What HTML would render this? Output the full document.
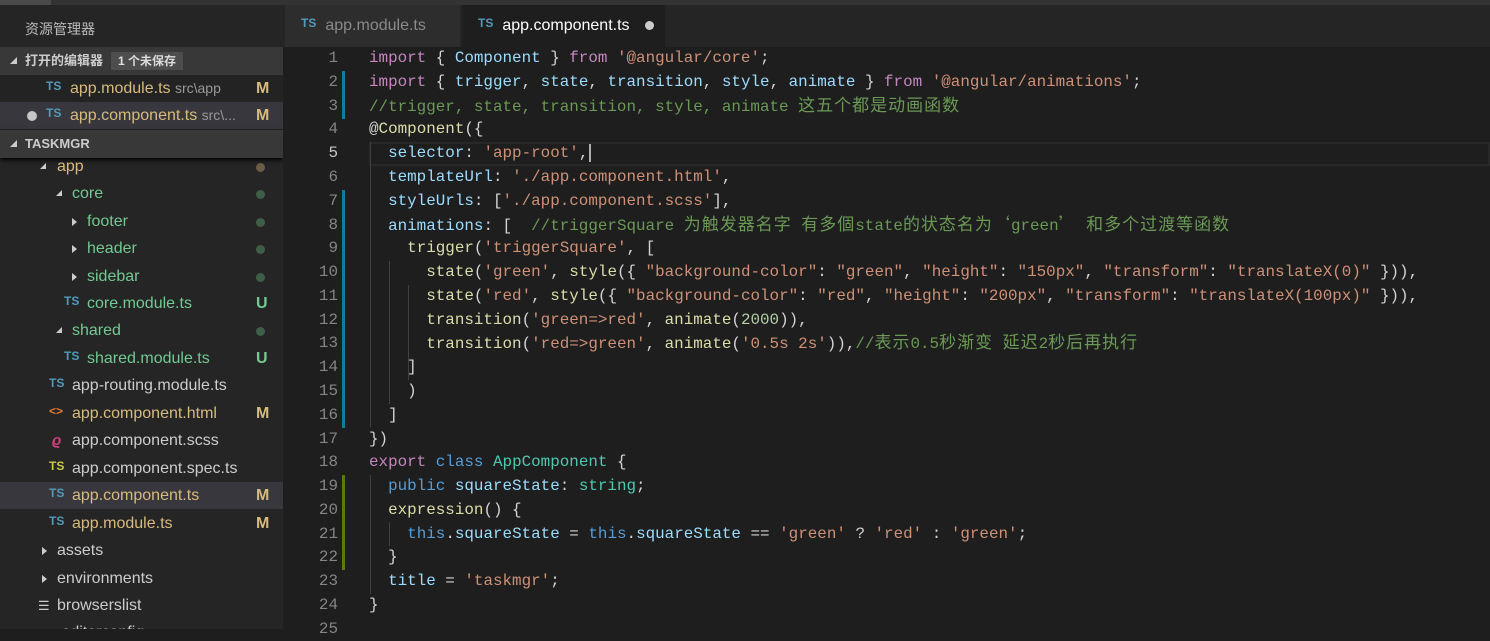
<!DOCTYPE html>
<html><head><meta charset="utf-8">
<style>
*{margin:0;padding:0;box-sizing:border-box}
body{width:1490px;height:629px;overflow:hidden;background:#1e1e1e;position:relative;font-family:"Liberation Sans","Noto Sans CJK SC",sans-serif}
.top{position:absolute;left:0;top:0;width:1490px;height:5px;background:#333}
.top i{position:absolute;left:0;top:0;width:51px;height:5px;background:#4a4a4a}
#side{position:absolute;left:0;top:5px;width:283px;height:624px;background:#252526;overflow:hidden}
.title{position:absolute;left:25px;top:14px;color:#bbb;font-size:14px}
.hdr{position:absolute;left:0;width:283px;height:28px;background:#383838;color:#ccc;font-size:13px;font-weight:bold;line-height:28px;padding-left:25px}
.hdr .tri{position:absolute;left:10px;top:10px;width:0;height:0;border-left:7px solid transparent;border-bottom:7px solid #ccc}
.badge{display:inline-block;background:#4d4d4d;color:#ddd;font-size:12px;line-height:18px;padding:0 7px;margin-left:8px;font-weight:bold}
.row{position:absolute;left:0;width:283px;height:27px;line-height:27px;font-size:16px;white-space:nowrap}
.row .ts{position:absolute;top:-2px;font-size:12px;font-weight:bold;color:#519aba}
.row .n{position:absolute;top:0}
.row .m{position:absolute;left:256px;top:0;font-size:16px;font-weight:bold}
.dot{position:absolute;left:256px;top:10px;width:9px;height:9px;border-radius:50%;background:#3e5e48}
.tr{position:absolute;top:10px;width:0;height:0;border-left:6px solid transparent;border-bottom:6px solid #ccc}
.tr.r{border-left:5px solid #ccc;border-top:4px solid transparent;border-bottom:4px solid transparent}
.y{color:#d7ba7d}.g{color:#73c991}.w{color:#ccc}.gr{color:#999}
#tabs{position:absolute;left:283px;top:5px;width:1207px;height:42px;background:#252526}
.tab{position:absolute;top:0;height:42px;line-height:42px;font-size:16px}
.tab .ts{font-size:12px;font-weight:bold;color:#519aba;vertical-align:top;position:relative;top:-3px;margin-right:9px}
#code{position:absolute;left:283px;top:47px;width:1207px;height:582px;background:#1e1e1e}
.ln{position:absolute;left:0;width:55px;text-align:right;color:#858585;font-family:"Liberation Mono",monospace;font-size:15.9px}
.ln.cur{color:#c6c6c6}
.cl{position:absolute;left:86px;white-space:pre;font-family:"Liberation Mono",monospace;font-size:15.9px;color:#d4d4d4}
.k{color:#c586c0}.v{color:#9cdcfe}.s{color:#ce9178}.c{color:#6a9955}.f{color:#dcdcaa}.b{color:#569cd6}.t{color:#4ec9b0}.nm{color:#b5cea8}
.cj{font-family:"Noto Sans CJK SC",sans-serif;font-size:17px;letter-spacing:1px;line-height:1}
.bar{position:absolute;left:59px;width:3px}
.guide{position:absolute;width:1px;background:#404040}
.curline{position:absolute;left:86px;width:1121px;height:24px;border:2px solid #282828}
</style></head><body>
<div class="top"><i></i></div>
<div id="side">
<div class="title">资源管理器</div>
<div class="hdr" style="top:42px"><span class="tri"></span>打开的编辑器<span class="badge">1 个未保存</span></div>
<div class="row" style="top:70px;background:#232323"><span class="ts" style="left:46px">TS</span><span class="n y" style="left:70px">app.module.ts <span class="gr" style="font-size:14px">src\app</span></span><span class="m y">M</span></div>
<div class="row" style="top:97px;background:#37373d"><span style="position:absolute;left:27px;top:9px;width:10px;height:10px;border-radius:50%;background:#c5c5c5"></span><span class="ts" style="left:46px">TS</span><span class="n y" style="left:70px">app.component.ts <span class="gr" style="font-size:14px">src\...</span></span><span class="m y">M</span></div>
<div class="hdr" style="top:125px;box-shadow:0 2px 4px #000"><span class="tri"></span>TASKMGR</div>
<div class="row" style="top:148px"><span class="tr" style="left:40px"></span><span class="n y" style="left:57px">app</span><span class="dot" style="background:#6b5c48"></span></div>
<div class="row" style="top:175px"><span class="tr" style="left:56px"></span><span class="n g" style="left:72px">core</span><span class="dot"></span></div>
<div class="row" style="top:203px"><span class="tr r" style="left:72px"></span><span class="n g" style="left:87px">footer</span><span class="dot"></span></div>
<div class="row" style="top:230px"><span class="tr r" style="left:72px"></span><span class="n g" style="left:87px">header</span><span class="dot"></span></div>
<div class="row" style="top:258px"><span class="tr r" style="left:72px"></span><span class="n g" style="left:87px">sidebar</span><span class="dot"></span></div>
<div class="row" style="top:285px"><span class="ts" style="left:64px">TS</span><span class="n g" style="left:87px">core.module.ts</span><span class="m g">U</span></div>
<div class="row" style="top:312px"><span class="tr" style="left:56px"></span><span class="n g" style="left:72px">shared</span><span class="dot"></span></div>
<div class="row" style="top:340px"><span class="ts" style="left:64px">TS</span><span class="n g" style="left:87px">shared.module.ts</span><span class="m g">U</span></div>
<div class="row" style="top:367px"><span class="ts" style="left:49px">TS</span><span class="n w" style="left:72px">app-routing.module.ts</span></div>
<div class="row" style="top:395px"><span class="ts" style="left:49px;color:#e37933">&lt;&gt;</span><span class="n y" style="left:72px">app.component.html</span><span class="m y">M</span></div>
<div class="row" style="top:422px"><span class="ts" style="left:52px;color:#cd3f7a;font-style:italic;font-size:15px;top:0">ϱ</span><span class="n w" style="left:72px">app.component.scss</span></div>
<div class="row" style="top:450px"><span class="ts" style="left:49px;color:#cbcb41">TS</span><span class="n w" style="left:72px">app.component.spec.ts</span></div>
<div class="row" style="top:477px;background:#37373d"><span class="ts" style="left:49px">TS</span><span class="n y" style="left:72px">app.component.ts</span><span class="m y">M</span></div>
<div class="row" style="top:505px"><span class="ts" style="left:49px">TS</span><span class="n y" style="left:72px">app.module.ts</span><span class="m y">M</span></div>
<div class="row" style="top:532px"><span class="tr r" style="left:42px"></span><span class="n w" style="left:57px">assets</span></div>
<div class="row" style="top:560px"><span class="tr r" style="left:42px"></span><span class="n w" style="left:57px">environments</span></div>
<div class="row" style="top:587px"><span class="n w" style="left:38px;font-size:13px">☰</span><span class="n w" style="left:57px">browserslist</span></div>
<div class="row" style="top:614px"><span class="n" style="left:38px;color:#cbcb41;font-size:13px">▲</span><span class="n w" style="left:57px">.editorconfig</span></div>
</div>
<div style="position:absolute;left:283px;top:5px;width:2px;height:624px;background:#2a2a2a"></div>
<div id="tabs">
<div class="tab" style="left:2px;width:175px;background:#2d2d2d;color:#8a8a8a;padding-left:16px"><span class="ts">TS</span>app.module.ts</div>
<div class="tab" style="left:179px;width:203px;background:#1e1e1e;color:#fff;padding-left:16px"><span class="ts">TS</span>app.component.ts<span style="position:absolute;left:183px;top:16px;width:9px;height:9px;border-radius:50%;background:#ccc"></span></div>
</div>
<div id="code">
<div class="curline" style="top:95px"></div>
<div class="bar" style="top:24px;height:48px;background:#0c7d9d"></div>
<div class="bar" style="top:143px;height:238px;background:#0c7d9d"></div>
<div class="bar" style="top:428px;height:95px;background:#587c0c"></div>
<div class="guide" style="left:87px;top:95px;height:285px"></div>
<div class="guide" style="left:106px;top:214px;height:143px"></div>
<div class="guide" style="left:125px;top:238px;height:95px"></div>
<div class="guide" style="left:87px;top:428px;height:119px"></div>
<div class="guide" style="left:106px;top:475px;height:24px"></div>
<div id="lines"></div>
</div>
<script>
const L=[
'<span class="k">import</span> { <span class="v">Component</span> } <span class="k">from</span> <span class="s">\'@angular/core\'</span>;',
'<span class="k">import</span> { <span class="v">trigger</span>, <span class="v">state</span>, <span class="v">transition</span>, <span class="v">style</span>, <span class="v">animate</span> } <span class="k">from</span> <span class="s">\'@angular/animations\'</span>;',
'<span class="c">//trigger, state, transition, style, animate <span class="cj">这五个都是动画函数</span></span>',
'@<span class="f">Component</span>({',
'  <span class="v">selector</span>: <span class="s">\'app-root\'</span>,<span style="border-left:2px solid #aeafad;margin-left:1px"></span>',
'  <span class="v">templateUrl</span>: <span class="s">\'./app.component.html\'</span>,',
'  <span class="v">styleUrls</span>: [<span class="s">\'./app.component.scss\'</span>],',
'  <span class="v">animations</span>: [  <span class="c">//triggerSquare <span class="cj">为触发器名字</span> <span class="cj">有多個</span>state<span class="cj">的状态名为‘</span>green<span class="cj">’</span> <span class="cj">和多个过渡等函数</span></span>',
'    <span class="f">trigger</span>(<span class="s">\'triggerSquare\'</span>, [',
'      <span class="f">state</span>(<span class="s">\'green\'</span>, <span class="f">style</span>({ <span class="s">"background-color"</span>: <span class="s">"green"</span>, <span class="s">"height"</span>: <span class="s">"150px"</span>, <span class="s">"transform"</span>: <span class="s">"translateX(0)"</span> })),',
'      <span class="f">state</span>(<span class="s">\'red\'</span>, <span class="f">style</span>({ <span class="s">"background-color"</span>: <span class="s">"red"</span>, <span class="s">"height"</span>: <span class="s">"200px"</span>, <span class="s">"transform"</span>: <span class="s">"translateX(100px)"</span> })),',
'      <span class="f">transition</span>(<span class="s">\'green=>red\'</span>, <span class="f">animate</span>(<span class="nm">2000</span>)),',
'      <span class="f">transition</span>(<span class="s">\'red=>green\'</span>, <span class="f">animate</span>(<span class="s">\'0.5s 2s\'</span>)),<span class="c">//<span class="cj">表示</span>0.5<span class="cj">秒渐变</span> <span class="cj">延迟</span>2<span class="cj">秒后再执行</span></span>',
'    ]',
'    )',
'  ]',
'})',
'<span class="k">export</span> <span class="b">class</span> <span class="t">AppComponent</span> {',
'  <span class="b">public</span> <span class="v">squareState</span>: <span class="t">string</span>;',
'  <span class="f">expression</span>() {',
'    <span class="b">this</span>.<span class="v">squareState</span> = <span class="b">this</span>.<span class="v">squareState</span> == <span class="s">\'green\'</span> ? <span class="s">\'red\'</span> : <span class="s">\'green\'</span>;',
'  }',
'  <span class="v">title</span> = <span class="s">\'taskmgr\'</span>;',
'}',
''];
let h='';
const LH=23.78;
L.forEach((s,i)=>{const top=(i*LH).toFixed(1);
h+=`<div class="ln${i==4?' cur':''}" style="top:${top}px;line-height:${LH}px">${i+1}</div><div class="cl" style="top:${top}px;height:${LH}px;line-height:${LH}px">${s}</div>`;});
document.getElementById('lines').innerHTML=h;
</script>
</body></html>
